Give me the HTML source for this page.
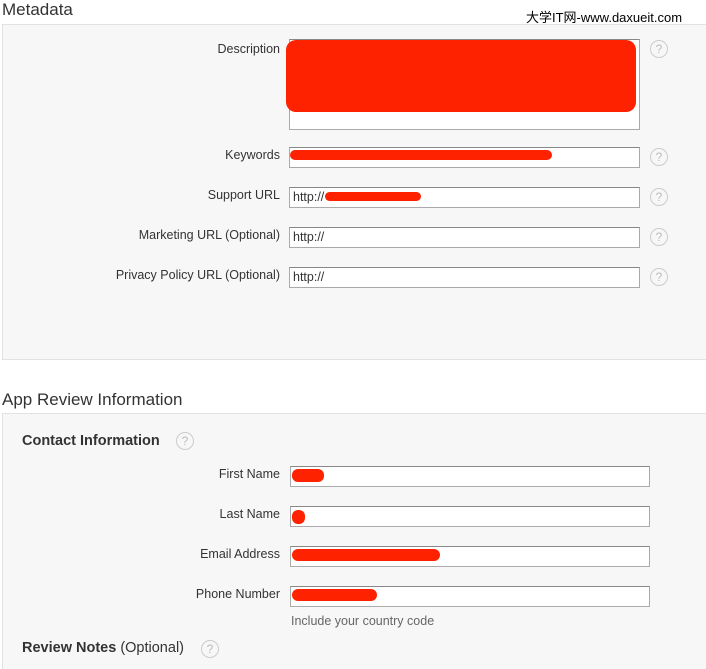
<html><head><style>
html,body{margin:0;width:706px;height:669px;overflow:hidden}
body{background:#fff;position:relative;font-family:"Liberation Sans","Noto Sans CJK SC",sans-serif;color:#333}
.a{position:absolute}
.p{position:absolute;background:#f7f7f7;border:1px solid #e2e2e2}
.l{position:absolute;font-size:12.5px;text-align:right;width:200px;color:#333}
.i{position:absolute;background:#fff;border:1px solid #aaa;border-top-color:#888;height:19px;box-sizing:border-box;font-size:12.5px;padding:2px 3px}
.q{position:absolute;width:16px;height:16px;border:1.5px solid #ccc;border-radius:50%;color:#bbb;font-size:12px;text-align:center;line-height:16px}
.r{position:absolute;background:#ff2200;border-radius:6px}
</style></head><body>
<div class="a" style="left:2px;top:0;font-size:17px;color:#333">Metadata</div>
<div class="a" style="left:526px;top:7px;font-size:13px;color:#000">大学IT网-www.daxueit.com</div>
<div class="p" style="left:2px;top:24px;width:710px;height:334px"></div>
<div class="l" style="left:80px;top:42px">Description</div>
<div class="i" style="left:289px;top:39px;width:351px;height:91px"></div>
<div class="r" style="left:286px;top:40px;width:350px;height:72px;border-radius:10px"></div>
<div class="q" style="left:650px;top:40px">?</div>
<div class="l" style="left:80px;top:148px">Keywords</div>
<div class="i" style="left:289px;top:147px;width:351px;height:21px"></div>
<div class="r" style="left:290px;top:150px;width:262px;height:10px"></div>
<div class="q" style="left:650px;top:148px">?</div>
<div class="l" style="left:80px;top:188px">Support URL</div>
<div class="i" style="left:289px;top:187px;width:351px;height:21px">http://</div>
<div class="r" style="left:325px;top:192px;width:96px;height:9px"></div>
<div class="q" style="left:650px;top:188px">?</div>
<div class="l" style="left:80px;top:228px">Marketing URL (Optional)</div>
<div class="i" style="left:289px;top:227px;width:351px;height:21px">http://</div>
<div class="q" style="left:650px;top:228px">?</div>
<div class="l" style="left:80px;top:268px">Privacy Policy URL (Optional)</div>
<div class="i" style="left:289px;top:267px;width:351px;height:21px">http://</div>
<div class="q" style="left:650px;top:268px">?</div>
<div class="a" style="left:2px;top:390px;font-size:17px">App Review Information</div>
<div class="p" style="left:2px;top:413px;width:710px;height:270px"></div>
<div class="a" style="left:22px;top:433px;font-size:14.5px;font-weight:bold">Contact Information</div>
<div class="q" style="left:176px;top:432px">?</div>
<div class="l" style="left:80px;top:467px">First Name</div>
<div class="i" style="left:290px;top:466px;width:360px;height:21px"></div>
<div class="r" style="left:292px;top:469px;width:32px;height:13px"></div>
<div class="l" style="left:80px;top:507px">Last Name</div>
<div class="i" style="left:290px;top:506px;width:360px;height:21px"></div>
<div class="r" style="left:292px;top:510px;width:13px;height:14px"></div>
<div class="l" style="left:80px;top:547px">Email Address</div>
<div class="i" style="left:290px;top:546px;width:360px;height:21px"></div>
<div class="r" style="left:292px;top:549px;width:148px;height:12px"></div>
<div class="l" style="left:80px;top:587px">Phone Number</div>
<div class="i" style="left:290px;top:586px;width:360px;height:21px"></div>
<div class="r" style="left:292px;top:589px;width:85px;height:12px"></div>
<div class="a" style="left:291px;top:614px;font-size:12.5px;color:#666">Include your country code</div>
<div class="a" style="left:22px;top:640px;font-size:14.5px"><b>Review Notes</b> (Optional)</div>
<div class="q" style="left:201px;top:640px">?</div>
</body></html>
